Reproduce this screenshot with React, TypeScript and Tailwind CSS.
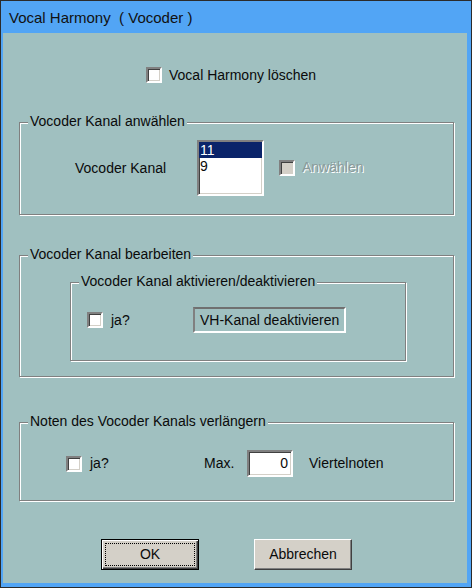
import React from "react";

const Check = ({ disabled }: { disabled?: boolean }) => (
  <span
    className={`block w-[16px] h-[16px] shrink-0 border-2 border-t-[#808080] border-l-[#808080] border-b-white border-r-white shadow-[inset_1px_1px_0_#404040,inset_-1px_-1px_0_#d4d0c8] ${
      disabled ? "bg-[#d4d0c8]" : "bg-white"
    }`}
  />
);

const Group = ({
  label,
  className,
  children,
}: {
  label: string;
  className: string;
  children?: React.ReactNode;
}) => (
  <div
    className={`relative shrink-0 border border-[#808080] shadow-[inset_1px_1px_0_#fff,1px_1px_0_#fff] ${className}`}
  >
    <span className="absolute left-[8px] -top-[10px] px-[2px] bg-[#a0c0c0] leading-[16px] whitespace-nowrap">
      {label}
    </span>
    {children}
  </div>
);

export default function App() {
  return (
    <div className="w-[472px] h-[588px] flex flex-col border border-[#2b2b2b] bg-[#52a5f5] pl-[2px] pr-[4px] pb-[4px] font-['Liberation_Sans',Arial,sans-serif] text-[14px] text-[#0a0a0a] overflow-hidden">
      {/* Title bar */}
      <div className="h-[32px] shrink-0 flex items-center pl-[6px] pt-[2px] text-[15px] text-[#111] whitespace-pre">
        Vocal Harmony  ( Vocoder )
      </div>

      {/* Dialog body */}
      <div className="flex-1 flex flex-col bg-[#a0c0c0]">
        <div className="mt-[34px] ml-[143px] flex items-center h-[16px]">
          <Check />
          <span className="ml-[7px] leading-[16px]">Vocal Harmony löschen</span>
        </div>

        <Group label="Vocoder Kanal anwählen" className="mt-[39px] ml-[16px] w-[435px] h-[93px]">
          <div className="flex items-start pt-[17px] pl-[55px]">
            <span className="w-[122px] h-[56px] flex items-center">Vocoder Kanal</span>
            <div className="w-[67px] h-[56px] bg-white border-2 border-t-[#808080] border-l-[#808080] border-b-white border-r-white shadow-[inset_1px_1px_0_#404040,inset_-1px_-1px_0_#d4d0c8] leading-[16px]">
              <div className="h-[16px] pl-[1px] bg-[#0a246a] text-white">11</div>
              <div className="h-[16px] pl-[1px]">9</div>
            </div>
            <div className="ml-[15px] mt-[17px] flex items-center">
              <Check disabled />
              <span className="ml-[7px] text-[#8a9a9a] [text-shadow:1px_1px_0_#fff]">Anwählen</span>
            </div>
          </div>
        </Group>

        <Group label="Vocoder Kanal bearbeiten" className="mt-[40px] ml-[16px] w-[435px] h-[122px]">
          <Group
            label="Vocoder Kanal aktivieren/deaktivieren"
            className="mt-[26px] ml-[50px] w-[336px] h-[79px]"
          >
            <div className="flex items-center pt-[24px] pl-[16px]">
              <Check />
              <span className="ml-[8px] w-[82px]">ja?</span>
              <div className="w-[153px] h-[26px] flex items-center pl-[5px] border-2 border-t-[#707070] border-l-[#808080] border-b-white border-r-white whitespace-nowrap">
                VH-Kanal deaktivieren
              </div>
            </div>
          </Group>
        </Group>

        <Group label="Noten des Vocoder Kanals verlängern" className="mt-[45px] ml-[16px] w-[435px] h-[79px]">
          <div className="flex items-center pt-[27px] pl-[46px]">
            <Check />
            <span className="ml-[8px] w-[114px]">ja?</span>
            <span className="w-[43px]">Max.</span>
            <div className="w-[46px] h-[27px] flex items-center justify-end pr-[3px] bg-white border-2 border-t-[#808080] border-l-[#808080] border-b-white border-r-white shadow-[inset_1px_1px_0_#404040,inset_-1px_-1px_0_#d4d0c8]">
              0
            </div>
            <span className="ml-[16px]">Viertelnoten</span>
          </div>
        </Group>

        <div className="mt-[38px] ml-[98px] flex gap-[55px]">
          <button className="w-[98px] h-[31px] flex p-[3px] bg-[#d4d0c8] border border-black shadow-[inset_1px_1px_0_#fff,inset_-1px_-1px_0_#404040,inset_-2px_-2px_0_#808080]">
            <span className="flex-1 flex items-center justify-center border border-dotted border-black">OK</span>
          </button>
          <button className="w-[98px] h-[31px] flex items-center justify-center bg-[#d4d0c8] border border-t-white border-l-white border-b-[#404040] border-r-[#404040] shadow-[inset_-1px_-1px_0_#808080]">
            Abbrechen
          </button>
        </div>
      </div>
    </div>
  );
}
